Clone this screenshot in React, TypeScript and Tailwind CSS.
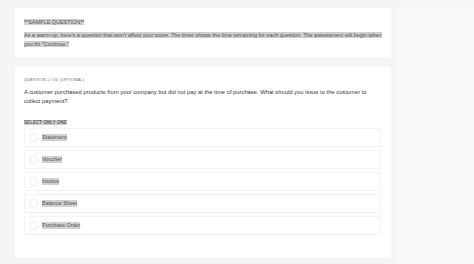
const options = ["Statement", "Voucher", "Invoice", "Balance Sheet", "Purchase Order"];

export default function App() {
  return (
    <div
      className="flex h-[264px] w-[474px] bg-[#f5f5f5] text-[#555]"
      style={{ fontFamily: '"Liberation Sans", Arial, sans-serif' }}
    >
      {/* main column */}
      <div className="flex w-[391px] flex-col gap-[10px] pl-[15px] pt-[8px]">
        {/* intro card */}
        <div className="h-[49px] bg-white px-[9px] pt-[10px]">
          <p className="text-[5.45px] leading-[8px]">
            <span className="bg-[#d0d0d0]">**SAMPLE QUESTION**</span>
          </p>
          <p className="mt-[5px] text-[5.45px] leading-[9px]">
            <span className="bg-[#d0d0d0]">
              As a warm-up, here's a question that won't affect your score. The timer shows the time
              remaining for each question. The assessment will begin when you hit "Continue."
            </span>
          </p>
        </div>

        {/* question card */}
        <div className="h-[191px] bg-white px-[9px] pt-[10px]">
          <p className="text-[4px] uppercase leading-[6px] tracking-[0.1px] text-[#666]">
            Question 1 / 16 &nbsp;(Optional)
          </p>
          <p className="mt-[5px] pr-[12px] text-[5.8px] leading-[9px] text-[#333]">
            A customer purchased products from your company but did not pay at the time of purchase.
            What should you issue to the customer to collect payment?
          </p>
          <p className="mt-[13px] text-[4.6px] font-bold uppercase leading-[7px] text-[#666]">
            <span className="bg-[#d0d0d0]">Select only one</span>
          </p>
          <div className="mt-[2px] flex w-[357px] flex-col gap-[3px]">
            {options.map((o) => (
              <div
                key={o}
                className="flex h-[19px] items-center gap-[4px] border border-[#f3f3f3] pl-[4px]"
              >
                <span className="h-[9px] w-[9px] rounded-full border border-[#ececec]" />
                <span className="bg-[#d0d0d0] text-[5.45px] leading-[7px]">{o}</span>
              </div>
            ))}
          </div>
        </div>
      </div>

      {/* side panel */}
      <div className="flex-1 pl-[3px] pt-[5px]">
        <div className="h-full border-l border-t border-[#f3f3f3] bg-[#f8f8f8]" />
      </div>
    </div>
  );
}
